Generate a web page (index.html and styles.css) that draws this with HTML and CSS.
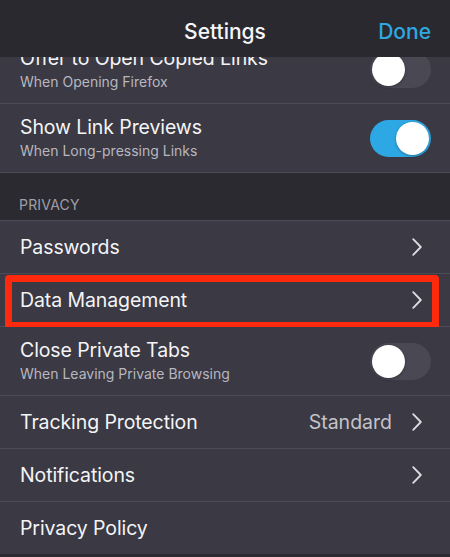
FILE: index.html
```html
<!DOCTYPE html>
<html>
<head>
<meta charset="utf-8">
<link rel="stylesheet" href="styles.css">
</head>
<body>
<div class="screen">
  <header class="navbar">
    <div class="nav-title">Settings</div>
    <div class="nav-done">Done</div>
  </header>
  <div class="viewport">
    <div class="list">
      <div class="row row-sub">
        <div class="texts">
          <div class="title">Offer to Open Copied Links</div>
          <div class="subtitle">When Opening Firefox</div>
        </div>
        <div class="toggle"><div class="knob"></div></div>
      </div>
      <div class="row row-sub">
        <div class="texts">
          <div class="title">Show Link Previews</div>
          <div class="subtitle">When Long-pressing Links</div>
        </div>
        <div class="toggle on"><div class="knob"></div></div>
      </div>
      <div class="section-header">PRIVACY</div>
      <div class="row row-link">
        <div class="title">Passwords</div>
        <svg class="chev" viewBox="0 0 10 18"><path d="M1.2 1.2 L8.8 9 L1.2 16.8"/></svg>
      </div>
      <div class="row row-link highlighted">
        <div class="title">Data Management</div>
        <svg class="chev" viewBox="0 0 10 18"><path d="M1.2 1.2 L8.8 9 L1.2 16.8"/></svg>
        <div class="highlight-box"></div>
      </div>
      <div class="row row-sub">
        <div class="texts">
          <div class="title">Close Private Tabs</div>
          <div class="subtitle">When Leaving Private Browsing</div>
        </div>
        <div class="toggle"><div class="knob"></div></div>
      </div>
      <div class="row row-link">
        <div class="title">Tracking Protection</div>
        <div class="value">Standard</div>
        <svg class="chev" viewBox="0 0 10 18"><path d="M1.2 1.2 L8.8 9 L1.2 16.8"/></svg>
      </div>
      <div class="row row-link">
        <div class="title">Notifications</div>
        <svg class="chev" viewBox="0 0 10 18"><path d="M1.2 1.2 L8.8 9 L1.2 16.8"/></svg>
      </div>
      <div class="row row-link last">
        <div class="title">Privacy Policy</div>
      </div>
      <div class="footer-space"></div>
    </div>
  </div>
</div>
</body>
</html>
```
FILE: styles.css
```css
* { box-sizing: border-box; }
html, body {
  margin: 0;
  padding: 0;
  background: #2b2a31;
}
body {
  font-family: Inter, "Liberation Sans", sans-serif;
  color: #f4f4f6;
}
.screen {
  width: 450px;
  height: 557px;
  display: flex;
  flex-direction: column;
  overflow: hidden;
}
.navbar {
  height: 57px;
  flex: none;
  background: #2a2930;
  display: flex;
  align-items: center;
  justify-content: center;
  position: relative;
  z-index: 2;
}
.nav-title {
  font-size: 21px;
  font-weight: 500;
  color: #f6f6f8;
  margin-top: 6px;
}
.nav-done {
  position: absolute;
  right: 19px;
  top: 19px;
  font-size: 21px;
  font-weight: 500;
  color: #2fa8e2;
}
.viewport {
  flex: 1;
  overflow: hidden;
}
.list {
  margin-top: -22px;
  display: flex;
  flex-direction: column;
}
.row {
  background: #3a3944;
  border-bottom: 1px solid #4d4c56;
  display: flex;
  align-items: center;
  padding: 0 19px 0 20px;
  position: relative;
}
.row-sub {
  height: 69px;
}
.row-link {
  height: 53px;
  padding-right: 28px;
}
.row.last { border-bottom: none; height: 52px; }
.texts {
  flex: 1;
  display: flex;
  flex-direction: column;
  gap: 3px;
  margin-top: -1px;
}
.title {
  font-size: 19.5px;
  line-height: 23px;
  letter-spacing: -0.1px;
  flex: 1;
}
.subtitle {
  font-size: 14px;
  line-height: 18px;
  color: #b8b7bf;
}
.value {
  font-size: 19.5px;
  color: #c4c3ca;
  margin-right: 20px;
}
.chev {
  width: 10px;
  height: 18px;
  fill: none;
  stroke: #dddce2;
  stroke-width: 1.8;
  stroke-linecap: round;
  stroke-linejoin: round;
}
.toggle {
  width: 61px;
  height: 37px;
  border-radius: 19px;
  background: #4a4953;
  position: relative;
  flex: none;
}
.toggle .knob {
  position: absolute;
  left: 2px;
  top: 2px;
  width: 33px;
  height: 33px;
  border-radius: 50%;
  background: #ffffff;
  box-shadow: 0 1px 3px rgba(0,0,0,0.3);
}
.toggle.on { background: #2ea8e4; }
.toggle.on .knob { left: 26px; }
.section-header {
  height: 48px;
  background: #2b2a31;
  border-bottom: 1px solid #4d4c56;
  color: #a09fa7;
  font-size: 14px;
  padding: 23px 0 0 19px;
  letter-spacing: 0.2px;
}
.highlight-box {
  position: absolute;
  left: 5px;
  top: 1px;
  width: 434px;
  height: 54px;
  border: 7px solid #ff2a0e;
  border-radius: 4px;
}
.footer-space {
  height: 30px;
  background: #2b2a31;
}
```
